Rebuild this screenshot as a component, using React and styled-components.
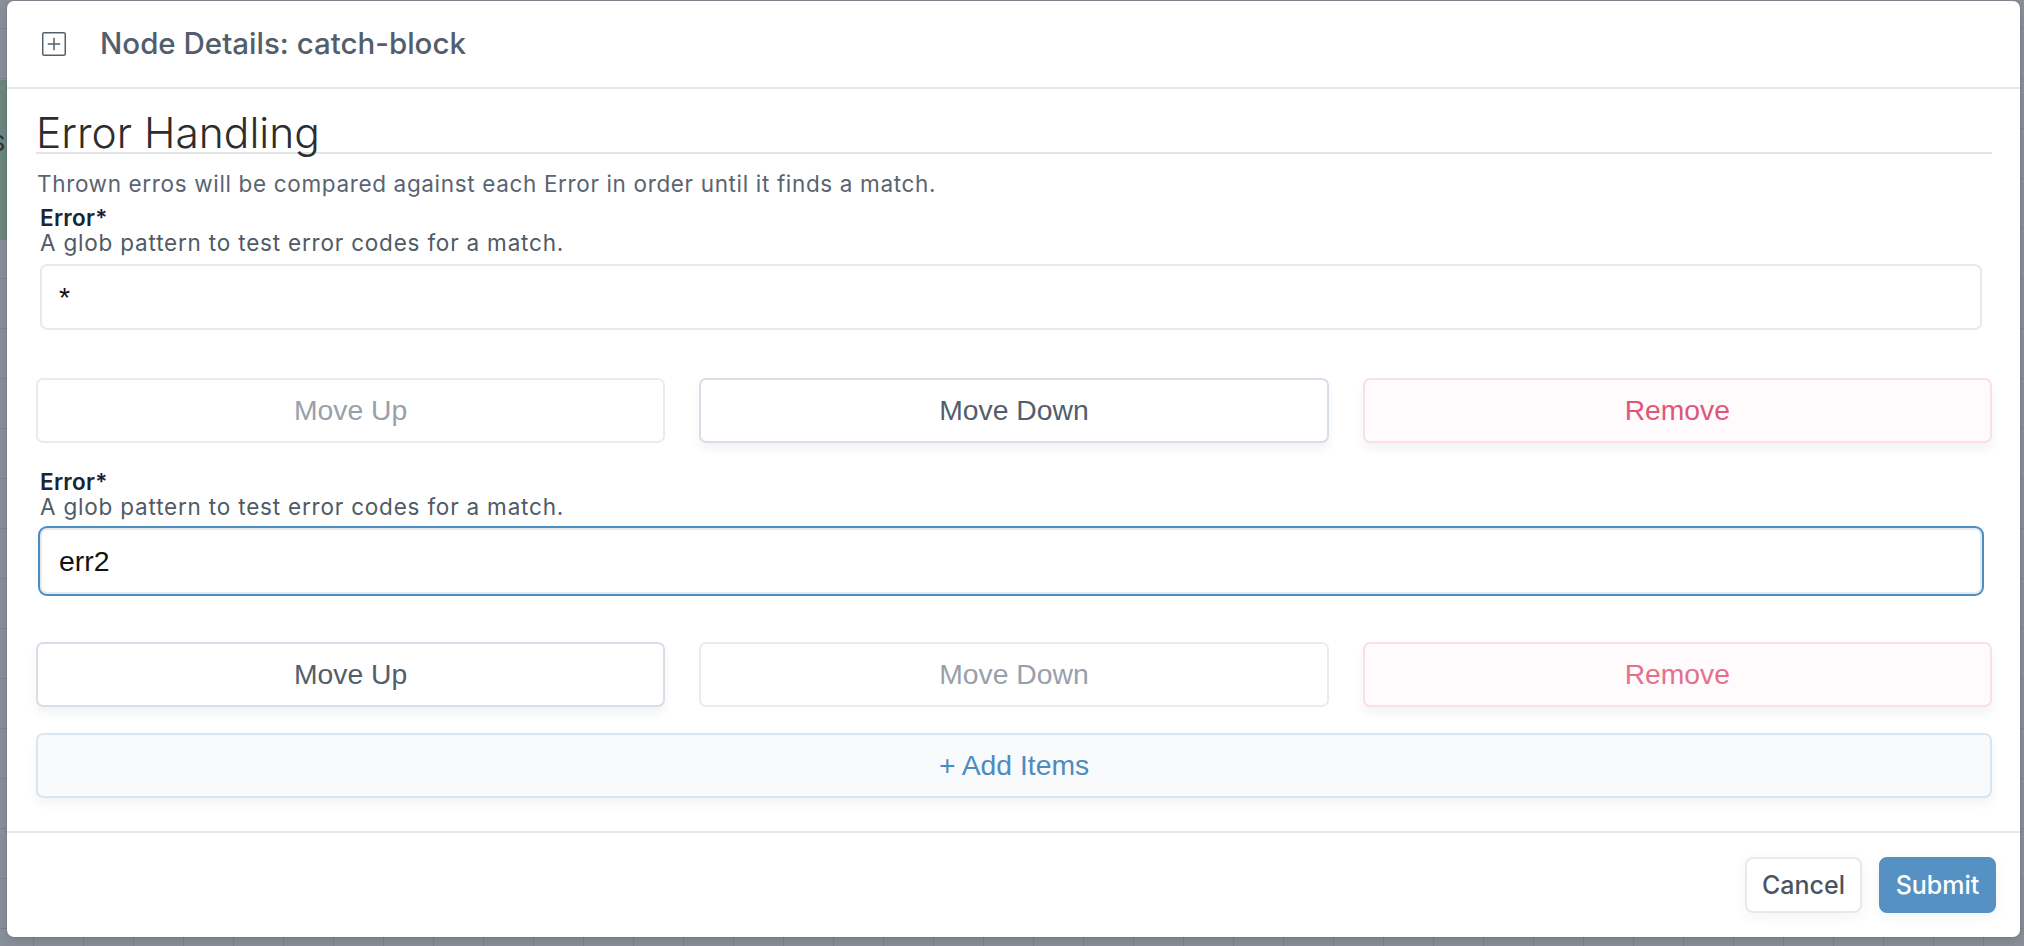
import React from "react";
import styled, { createGlobalStyle, css } from "styled-components";

const Global = createGlobalStyle`
  html, body { margin: 0; padding: 0; overflow: hidden; }
  body { font-family: Inter, "Noto Sans", sans-serif; }
  * { box-sizing: border-box; }
`;

const Canvas = styled.div`
  position: relative;
  width: 2024px;
  height: 946px;
  display: flex;
  padding: 1px 4px 9px 7px;
  background-color: #8a9099;
  background-image: linear-gradient(to right, #7d848d 1px, transparent 1px),
    linear-gradient(to bottom, #7d848d 1px, transparent 1px);
  background-size: 50px 50px;
  background-position: 33px 28px;
  overflow: hidden;
`;

const CanvasNode = styled.div`
  position: absolute;
  left: -180px;
  top: 80px;
  width: 190px;
  height: 160px;
  background: #6e8781;
  color: #2a2f33;
  font-family: Inter, sans-serif;
  font-size: 22px;
  display: flex;
  justify-content: flex-end;
  padding-top: 50px;
  padding-right: 5px;
`;

const Modal = styled.div`
  position: relative;
  z-index: 1;
  flex: 1;
  display: flex;
  flex-direction: column;
  background: #ffffff;
  border-radius: 7px;
  box-shadow: 0 0 0 1px rgba(0, 0, 0, 0.06), 0 4px 12px rgba(0, 0, 0, 0.12);
  overflow: hidden;
`;

const Header = styled.div`
  height: 88px;
  flex: none;
  display: flex;
  align-items: center;
  gap: 34px;
  padding-left: 35px;
  border-bottom: 2px solid #e6e8ee;
`;

const Title = styled.h2`
  margin: 0;
  font-family: Inter, sans-serif;
  font-weight: 500;
  font-size: 29.5px;
  line-height: 1;
  color: #525e6c;
`;

const Body = styled.div`
  flex: 1;
  display: flex;
  flex-direction: column;
  padding: 25px 28px 0 29px;
`;

const Legend = styled.div`
  font-family: Inter, sans-serif;
  font-weight: 300;
  font-size: 42.5px;
  line-height: 38px;
  color: #2d2d2d;
  border-bottom: 2px solid #e4e4e4;
`;

const Description = styled.p`
  margin: 17px 0 0 1px;
  font-size: 22.5px;
  letter-spacing: 0.65px;
  line-height: 25px;
  color: #5a6471;
`;

const ItemList = styled.div`
  margin-top: 9px;
  display: flex;
  flex-direction: column;
  gap: 26px;
`;

const Item = styled.div`
  display: flex;
  flex-direction: column;
`;

const Field = styled.div`
  display: flex;
  flex-direction: column;
  padding: 0 10px 0 4px;
`;

const Label = styled.label`
  font-size: 22.5px;
  letter-spacing: 0.3px;
  line-height: 25px;
  font-weight: 600;
  color: #1a2433;
`;

const Help = styled.div`
  font-size: 22.5px;
  letter-spacing: 0.8px;
  line-height: 25px;
  color: #4f5a67;
`;

const Input = styled.input`
  margin-top: 9px;
  height: 66px;
  width: 100%;
  padding: 0 17px;
  border: 2px solid #e6e9ee;
  border-radius: 7px;
  font-family: "Liberation Sans", Arial, sans-serif;
  font-size: 28.4px;
  color: #111;
  background: #fff;
  outline: none;
  ${(p) =>
    p.$focused &&
    css`
      box-shadow: 0 0 0 2px #4b8ec4;
    `}
`;

const ButtonRow = styled.div`
  margin-top: 48px;
  display: grid;
  grid-template-columns: repeat(3, 1fr);
  gap: 34px;
`;

const ArrayButton = styled.button`
  height: 65px;
  border-radius: 7px;
  border: 2px solid #d7dee8;
  background: #ffffff;
  font-family: "Liberation Sans", Arial, sans-serif;
  font-size: 28.3px;
  color: #525e6c;
  box-shadow: 0 6px 10px rgba(30, 45, 70, 0.06);
  cursor: pointer;
  ${(p) =>
    p.disabled &&
    css`
      border-color: #e8ebf0;
      color: #97a0ab;
      box-shadow: none;
      cursor: default;
    `}
  ${(p) =>
    p.$danger &&
    css`
      border-color: #fbdfe6;
      background: #fffafb;
      color: ${p.$muted ? "#e4718c" : "#dd5878"};
    `}
`;

const AddButton = styled.button`
  margin-top: 26px;
  height: 65px;
  width: 100%;
  border-radius: 7px;
  border: 2px solid #d8e6f1;
  background: #f8fafc;
  font-family: "Liberation Sans", Arial, sans-serif;
  font-size: 28.3px;
  color: #4c8cc1;
  box-shadow: 0 6px 10px rgba(30, 45, 70, 0.05);
  cursor: pointer;
`;

const Footer = styled.div`
  flex: none;
  display: flex;
  justify-content: flex-end;
  gap: 17px;
  padding: 24px 24px 24px;
  border-top: 2px solid #e6e8ee;
`;

const FooterButton = styled.button`
  height: 56px;
  width: 117px;
  border-radius: 8px;
  font-family: Inter, sans-serif;
  font-weight: 500;
  font-size: 25px;
  border: 2px solid #e7e9ed;
  background: #fff;
  color: #4a5563;
  box-shadow: 0 4px 14px rgba(0, 0, 0, 0.05);
  cursor: pointer;
  ${(p) =>
    p.$primary &&
    css`
      border-color: #5592c3;
      background: #5592c3;
      color: #ffffff;
    `}
`;

const ExpandIcon = () => (
  <svg width="24" height="24" viewBox="0 0 24 24" fill="none" stroke="#55606d" strokeWidth="1.5">
    <rect x="0.75" y="0.75" width="22.5" height="22.5" rx="1.5" />
    <path d="M12 6.5v11M6.5 12h11" strokeLinecap="square" />
  </svg>
);

const items = [
  { value: "*", focused: false, first: true, last: false },
  { value: "err2", focused: true, first: false, last: true },
];

export default function App() {
  return (
    <>
      <Global />
      <Canvas>
        <CanvasNode>S</CanvasNode>
        <Modal>
          <Header>
            <ExpandIcon />
            <Title>Node Details: catch-block</Title>
          </Header>
          <Body>
            <Legend>Error Handling</Legend>
            <Description>
              Thrown erros will be compared against each Error in order until it finds a match.
            </Description>
            <ItemList>
              {items.map((it, i) => (
                <Item key={i}>
                  <Field>
                    <Label>Error*</Label>
                    <Help>A glob pattern to test error codes for a match.</Help>
                    <Input defaultValue={it.value} $focused={it.focused} readOnly />
                  </Field>
                  <ButtonRow>
                    <ArrayButton disabled={it.first}>Move Up</ArrayButton>
                    <ArrayButton disabled={it.last}>Move Down</ArrayButton>
                    <ArrayButton $danger $muted={it.last}>Remove</ArrayButton>
                  </ButtonRow>
                </Item>
              ))}
            </ItemList>
            <AddButton>+ Add Items</AddButton>
          </Body>
          <Footer>
            <FooterButton>Cancel</FooterButton>
            <FooterButton $primary>Submit</FooterButton>
          </Footer>
        </Modal>
      </Canvas>
    </>
  );
}
